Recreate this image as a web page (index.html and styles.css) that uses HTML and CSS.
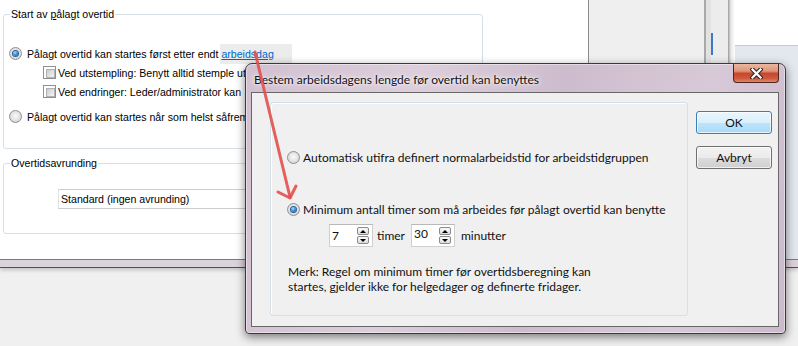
FILE: index.html
```html
<!DOCTYPE html>
<html lang="no">
<head>
    <meta charset="UTF-8">
    <title>Overtid</title>
    <link rel="stylesheet" href="styles.css">
</head>
<body>
<div class="app">
    <div class="top">
        <div class="pane">
            <fieldset class="grp grp-start">
                <legend>Start av <u>p</u>ålagt overtid</legend>
                <div class="row row-first">
                    <span class="radio on"></span>
                    <span class="lbl">Pålagt overtid kan startes først etter endt</span>
                    <a class="link" href="#">arbeidsdag</a>
                </div>
                <div class="row row-sub">
                    <span class="cb"></span>
                    <span class="lbl">Ved utstempling: Benytt alltid stemple ut</span>
                </div>
                <div class="row row-sub">
                    <span class="cb"></span>
                    <span class="lbl">Ved endringer: Leder/administrator kan</span>
                </div>
                <div class="row row-last">
                    <span class="radio"></span>
                    <span class="lbl">Pålagt overtid kan startes når som helst såfrem</span>
                </div>
            </fieldset>
            <fieldset class="grp grp-round">
                <legend>Overtidsavrunding</legend>
                <div class="combo">Standard (ingen avrunding)</div>
            </fieldset>
        </div>
        <div class="side"></div>
        <div class="scroll"><span class="thumb"></span></div>
        <div class="edge"></div>
        <div class="far"><div class="far-head"></div></div>
    </div>
    <div class="frame-edge"></div>
</div>

<div class="dlg">
    <div class="dlg-title">
        <span class="dlg-caption">Bestem arbeidsdagens lengde før overtid kan benyttes</span>
        <span class="close">
            <svg width="13" height="11" viewBox="0 0 13 11">
                <path d="M2.5 1.5 L10.5 9.5 M10.5 1.5 L2.5 9.5" stroke="#3b2622" stroke-width="4.4" stroke-linecap="square"/>
                <path d="M2.5 1.5 L10.5 9.5 M10.5 1.5 L2.5 9.5" stroke="#fff" stroke-width="2.2" stroke-linecap="square"/>
            </svg>
        </span>
    </div>
    <div class="client">
        <div class="panel">
            <div class="opt opt-auto">
                <span class="radio"></span>
                <span>Automatisk utifra definert normalarbeidstid for arbeidstidgruppen</span>
            </div>
            <div class="opt opt-min">
                <span class="radio on"></span>
                <span>Minimum antall timer som må arbeides før pålagt overtid kan benytte</span>
            </div>
            <div class="spins">
                <div class="spin">
                    <span class="spin-val">7</span>
                    <span class="spin-btns"><i class="up"></i><i class="down"></i></span>
                </div>
                <span class="unit">timer</span>
                <div class="spin">
                    <span class="spin-val spin-hi">30</span>
                    <span class="spin-btns"><i class="up"></i><i class="down"></i></span>
                </div>
                <span class="unit unit-min">minutter</span>
            </div>
            <p class="note">Merk: Regel om minimum timer før overtidsberegning kan<br>startes, gjelder ikke for helgedager og definerte fridager.</p>
        </div>
        <div class="btns">
            <button class="btn btn-ok">OK</button>
            <button class="btn">Avbryt</button>
        </div>
    </div>
</div>

<svg class="arrow" width="798" height="346" viewBox="0 0 798 346">
    <path d="M255 52 L290 197" stroke="#e2504c" stroke-width="3" stroke-linecap="round" fill="none" opacity="0.9"/>
    <path d="M278 192 L290 198 L296 186" stroke="#e2504c" stroke-width="3" stroke-linecap="round" stroke-linejoin="round" fill="none" opacity="0.9"/>
</svg>
</body>
</html>
```

FILE: styles.css
```css
*{
    margin: 0;
    padding: 0;
    box-sizing: border-box;
}
html,body{
    width: 798px;
    height: 346px;
    overflow: hidden;
}
body{
    position: relative;
    background: #f0f0f0;
    font-family: "Liberation Sans", Arial, sans-serif;
    font-size: 10.6px;
    color: #000;
}

/* background window */
.top{
    display: flex;
    height: 259px;
    background: #fff;
}
.pane{
    width: 588px;
    padding: 7px 0 0 3px;
    background: #fff;
}
.grp{
    width: 480px;
    border: 1px solid #d5dfe5;
    border-radius: 3px;
}
.grp legend{
    margin-left: 6px;
    padding: 0 1px;
    line-height: 14px;
}
.grp-start{
    height: 142px;
}
.grp-round{
    height: 78px;
    margin-top: 7px;
}
.row{
    display: flex;
    align-items: center;
    height: 19px;
    white-space: nowrap;
}
.row-first{
    margin-top: 23px;
    padding-left: 5px;
}
.row-first .lbl,.row-last .lbl{
    margin-left: 5px;
}
.row-sub{
    padding-left: 39px;
}
.row-sub .lbl{
    margin-left: 2px;
}
.row-last{
    margin-top: 6px;
    padding-left: 5px;
}
.link{
    display: inline-block;
    height: 20px;
    line-height: 20px;
    margin-left: 2px;
    padding: 0 18px 0 1px;
    background: #ececec;
    color: #0066cc;
}
.combo{
    width: 320px;
    height: 20px;
    margin: 19px 0 0 54px;
    padding-left: 2px;
    line-height: 18px;
    border: 1px solid #cdcdcd;
    border-left-color: #e2e2e2;
    background: #fff;
}

.side{
    width: 118px;
    height: 63px;
    background: #efefef;
    border-left: 1px solid #8c8c8c;
    border-right: 2px solid #a9a9a9;
}
.scroll{
    position: relative;
    width: 22px;
    height: 63px;
    background: #ececec;
    border-left: 5px solid #e2e2e2;
}
.scroll .thumb{
    position: absolute;
    left: 0;
    top: 33px;
    width: 2px;
    height: 22px;
    background: #3c78c8;
}
.edge{
    width: 7px;
    height: 63px;
    background: linear-gradient(90deg,#9a9a9a,#e6e6e6 40%,#fff);
}
.far{
    flex: 1;
    background: #e3e8ee;
}
.far-head{
    height: 46px;
    background: #fff;
    border-bottom: 1px solid #c3ccd6;
}
.frame-edge{
    height: 9px;
    border-top: 1px solid #7a7a7a;
    border-bottom: 1px solid #505050;
    background: #dcd2dc;
    box-shadow: 0 2px 4px rgba(0,0,0,.2);
}

/* controls */
.radio{
    flex: none;
    display: flex;
    align-items: center;
    justify-content: center;
    width: 13px;
    height: 13px;
    border-radius: 50%;
    border: 1px solid #8e8f8f;
    background: radial-gradient(circle at 50% 45%,#fafafa 0,#e6e6e6 45%,#c9c9c9 100%);
}
.radio.on::after{
    content: "";
    width: 5px;
    height: 5px;
    border-radius: 50%;
    background: radial-gradient(circle at 40% 35%,#a8dcff,#2a7bd0 60%,#0e3f7c);
    box-shadow: 0 0 0 1px #2b5f99;
}
.cb{
    flex: none;
    width: 13px;
    height: 13px;
    padding: 2px;
    border: 1px solid #8e8f8f;
    background: #fff;
}
.cb::after{
    content: "";
    display: block;
    width: 7px;
    height: 7px;
    border: 1px solid #aeb1b5;
    background: linear-gradient(135deg,#cbcbcb,#f5f5f5);
}

/* dialog */
.dlg{
    position: absolute;
    left: 245px;
    top: 63px;
    width: 541px;
    height: 271px;
    display: flex;
    flex-direction: column;
    padding: 0 6px 6px 5px;
    border: 1px solid #3a3a3a;
    border-radius: 7px 7px 4px 4px;
    background: linear-gradient(100deg,#d2c0d1 0%,#dccedb 30%,#cdbccd 55%,#d8c9d8 80%,#cbbacb 100%);
    box-shadow: 0 3px 10px rgba(0,0,0,.5), inset 0 0 0 1px rgba(255,255,255,.45);
    font-family: Lato, "Open Sans", sans-serif;
    font-size: 12px;
    color: #111;
}
.dlg-title{
    display: flex;
    justify-content: space-between;
    height: 28px;
    padding-left: 3px;
}
.dlg-caption{
    padding-top: 8px;
    line-height: 15px;
    text-shadow: 0 0 6px #fff, 0 0 3px #fff;
}
.close{
    display: flex;
    align-items: center;
    justify-content: center;
    width: 46px;
    height: 19px;
    border: 1px solid #4a2620;
    border-top: none;
    border-radius: 0 0 4px 4px;
    background: linear-gradient(#ecb8a2 0%,#dd9478 40%,#c8472c 52%,#d0583b 80%,#e08a6a 100%);
}
.client{
    flex: 1;
    display: flex;
    border: 1px solid #676767;
    background: #f0f0f0;
}
.panel{
    width: 418px;
    height: 214px;
    margin: 9px 0 0 18px;
    border: 1px solid #d5dfe5;
    border-radius: 3px;
    box-shadow: inset 1px 1px 0 #fff;
}
.opt{
    display: flex;
    align-items: center;
    height: 16px;
    padding-left: 16px;
    white-space: nowrap;
}
.opt span + span{
    margin-left: 3px;
}
.opt-auto{
    margin-top: 46px;
}
.opt-min{
    margin-top: 36px;
}
.spins{
    display: flex;
    align-items: center;
    height: 23px;
    margin: 7px 0 0 58px;
}
.spin{
    display: flex;
    align-items: center;
    justify-content: space-between;
    width: 44px;
    height: 23px;
    padding: 0 3px 0 2px;
    border: 1px solid #cfcfcf;
    border-top-color: #b9b9b9;
    background: #fff;
}
.spin-hi{
    margin-top: -4px;
}
.spin-btns{
    display: flex;
    flex-direction: column;
    gap: 1px;
}
.spin-btns i{
    display: flex;
    align-items: center;
    justify-content: center;
    width: 12px;
    height: 8px;
    border: 1px solid #8a8a8a;
    border-radius: 2px;
    background: linear-gradient(#fbfbfb,#dcdcdc);
}
.spin-btns i::after{
    content: "";
    border-left: 3px solid transparent;
    border-right: 3px solid transparent;
}
.spin-btns .up::after{
    border-bottom: 3px solid #000;
}
.spin-btns .down::after{
    border-top: 3px solid #000;
}
.unit{
    margin: 0 6px 0 4px;
}
.unit-min{
    margin-left: 6px;
}
.note{
    margin: 17px 0 0 17px;
    line-height: 15px;
}
.btns{
    display: flex;
    flex-direction: column;
    gap: 12px;
    margin: 18px 0 0 8px;
}
.btn{
    width: 76px;
    height: 23px;
    border: 1px solid #707070;
    border-radius: 3px;
    background: linear-gradient(#f2f2f2 0%,#ebebeb 50%,#dddddd 51%,#cfcfcf 100%);
    box-shadow: inset 0 0 0 1px rgba(255,255,255,.7);
    font: inherit;
    color: #111;
}
.btn-ok{
    border-color: #3c7fb1;
    background: linear-gradient(#eaf6fd 0%,#d9f0fc 50%,#bee6fd 51%,#a7d9f5 100%);
}

.arrow{
    position: absolute;
    left: 0;
    top: 0;
    pointer-events: none;
}
```
